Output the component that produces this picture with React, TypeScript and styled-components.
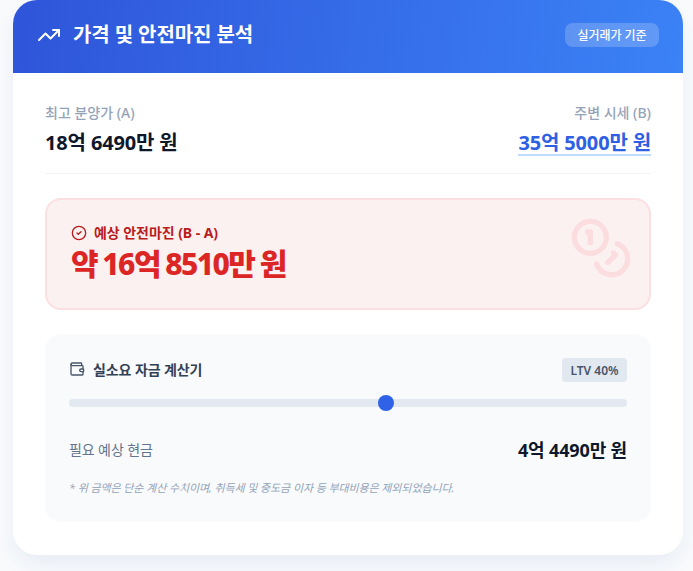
import React, { FC } from 'react';
import styled, { createGlobalStyle } from 'styled-components';
import { TrendingUp, CircleCheck, Coins, Wallet } from 'lucide-react';

const GlobalStyle = createGlobalStyle`
  html, body {
    margin: 0;
    padding: 0;
    background: #f8fafc;
    font-family: "Noto Sans", "Noto Sans CJK KR", sans-serif;
  }
`;

const Page = styled.div`
  height: 571px;
  overflow: hidden;
  padding: 0 10px 0 13px;
  box-sizing: border-box;
`;

const Card = styled.section`
  height: 555px;
  background: #fff;
  border-radius: 24px;
  overflow: hidden;
  box-shadow: 0 10px 25px -5px rgba(37, 64, 150, 0.1);
`;

const Header = styled.header`
  height: 73px;
  box-sizing: border-box;
  padding: 0 24px 4px 24px;
  display: flex;
  align-items: center;
  justify-content: space-between;
  background: linear-gradient(100deg, #2f55d9, #3b82f6);
  color: #fff;
`;

const HeaderTitle = styled.h2`
  margin: 0;
  display: flex;
  align-items: center;
  gap: 12px;
  font-size: 20px;
  font-weight: 700;
  line-height: 28px;
  letter-spacing: -0.1px;
`;

const HeaderBadge = styled.span`
  height: 24px;
  padding: 0 12.5px;
  display: flex;
  align-items: center;
  border-radius: 8px;
  background: rgba(255, 255, 255, 0.2);
  font-size: 12px;
  font-weight: 500;
  letter-spacing: -0.05px;
`;

const Body = styled.div`
  padding: 31px 32px 0;
`;

const PriceRow = styled.div`
  display: flex;
  justify-content: space-between;
  padding-bottom: 17px;
  border-bottom: 1px solid #f1f5f9;
`;

const PriceCol = styled.div<{ $right?: boolean }>`
  display: flex;
  flex-direction: column;
  align-items: ${(p) => (p.$right ? 'flex-end' : 'flex-start')};
`;

const PriceLabel = styled.span`
  font-size: 14px;
  line-height: 18px;
  font-weight: 500;
  color: #94a3b8;
`;

const PriceValue = styled.span<{ $accent?: boolean }>`
  margin-top: 7px;
  font-size: 20px;
  line-height: 28px;
  font-weight: 700;
  letter-spacing: -0.15px;
  color: ${(p) => (p.$accent ? '#2f5fe3' : '#0f172a')};
  border-bottom: ${(p) => (p.$accent ? '2px solid #bfdbfe' : '2px solid transparent')};
  height: 25px;
`;

const MarginBox = styled.div`
  position: relative;
  box-sizing: border-box;
  margin-top: 24px;
  height: 112px;
  padding: 0 24px 3px;
  display: flex;
  flex-direction: column;
  justify-content: center;
  border: 2px solid #fcdfe1;
  border-radius: 16px;
  background: #fcf1f1;
`;

const MarginLabel = styled.div`
  display: flex;
  align-items: center;
  gap: 7px;
  font-size: 14px;
  line-height: 20px;
  font-weight: 700;
  letter-spacing: -0.05px;
  color: #b91c1c;
`;

const MarginValue = styled.div`
  margin-top: 3px;
  font-size: 30px;
  line-height: 36px;
  font-weight: 800;
  letter-spacing: -1.55px;
  word-spacing: -1px;
  color: #dc2626;
`;

const MarginIcon = styled(Coins)`
  position: absolute;
  right: 16px;
  top: 16px;
  color: #fbdde0;
`;

const Calculator = styled.div`
  margin-top: 24px;
  height: 188px;
  box-sizing: border-box;
  padding: 24px;
  background: #f8fafc;
  border-radius: 16px;
`;

const CalcHeader = styled.div`
  display: flex;
  align-items: center;
  justify-content: space-between;
  height: 24px;
`;

const CalcTitle = styled.h3`
  margin: 0 0 2px;
  display: flex;
  align-items: center;
  gap: 8px;
  font-size: 14px;
  font-weight: 700;
  letter-spacing: -0.1px;
  color: #334155;
`;

const LtvBadge = styled.span`
  height: 24px;
  padding: 0 8.5px;
  display: flex;
  align-items: center;
  border-radius: 4px;
  background: #e2e8f0;
  font-size: 12px;
  font-weight: 600;
  color: #475569;
`;

const Slider = styled.input`
  display: block;
  width: 100%;
  height: 16px;
  margin: 13px 0 0;
  appearance: none;
  background: transparent;

  &::-webkit-slider-runnable-track {
    height: 8px;
    border-radius: 4px;
    background: #e2e8f0;
  }
  &::-webkit-slider-thumb {
    appearance: none;
    width: 16px;
    height: 16px;
    margin-top: -4px;
    border-radius: 50%;
    background: #2f62e6;
  }
`;

const ResultRow = styled.div`
  margin-top: 24px;
  display: flex;
  align-items: center;
  justify-content: space-between;
  height: 28px;
`;

const ResultLabel = styled.span`
  font-size: 14px;
  letter-spacing: -0.1px;
  color: #64748b;
`;

const ResultValue = styled.span`
  font-size: 18px;
  font-weight: 700;
  letter-spacing: -0.15px;
  color: #0f172a;
`;

const Note = styled.p`
  margin: 17px 0 0;
  font-size: 11px;
  line-height: 16px;
  letter-spacing: -0.1px;
  font-style: italic;
  color: #94a3b8;
`;

const App: FC = () => (
  <Page>
    <GlobalStyle />
    <Card>
      <Header>
        <HeaderTitle>
          <TrendingUp size={24} strokeWidth={2} />
          가격 및 안전마진 분석
        </HeaderTitle>
        <HeaderBadge>실거래가 기준</HeaderBadge>
      </Header>
      <Body>
        <PriceRow>
          <PriceCol>
            <PriceLabel>최고 분양가 (A)</PriceLabel>
            <PriceValue>18억 6490만 원</PriceValue>
          </PriceCol>
          <PriceCol $right>
            <PriceLabel>주변 시세 (B)</PriceLabel>
            <PriceValue $accent>35억 5000만 원</PriceValue>
          </PriceCol>
        </PriceRow>
        <MarginBox>
          <MarginLabel>
            <CircleCheck size={16} strokeWidth={2} />
            예상 안전마진 (B - A)
          </MarginLabel>
          <MarginValue>약 16억 8510만 원</MarginValue>
          <MarginIcon size={64} strokeWidth={2} />
        </MarginBox>
        <Calculator>
          <CalcHeader>
            <CalcTitle>
              <Wallet size={16} strokeWidth={2} color="#475569" />
              실소요 자금 계산기
            </CalcTitle>
            <LtvBadge>LTV 40%</LtvBadge>
          </CalcHeader>
          <Slider type="range" min={0} max={100} defaultValue={57} />
          <ResultRow>
            <ResultLabel>필요 예상 현금</ResultLabel>
            <ResultValue>4억 4490만 원</ResultValue>
          </ResultRow>
          <Note>* 위 금액은 단순 계산 수치이며, 취득세 및 중도금 이자 등 부대비용은 제외되었습니다.</Note>
        </Calculator>
      </Body>
    </Card>
  </Page>
);

export default App;
